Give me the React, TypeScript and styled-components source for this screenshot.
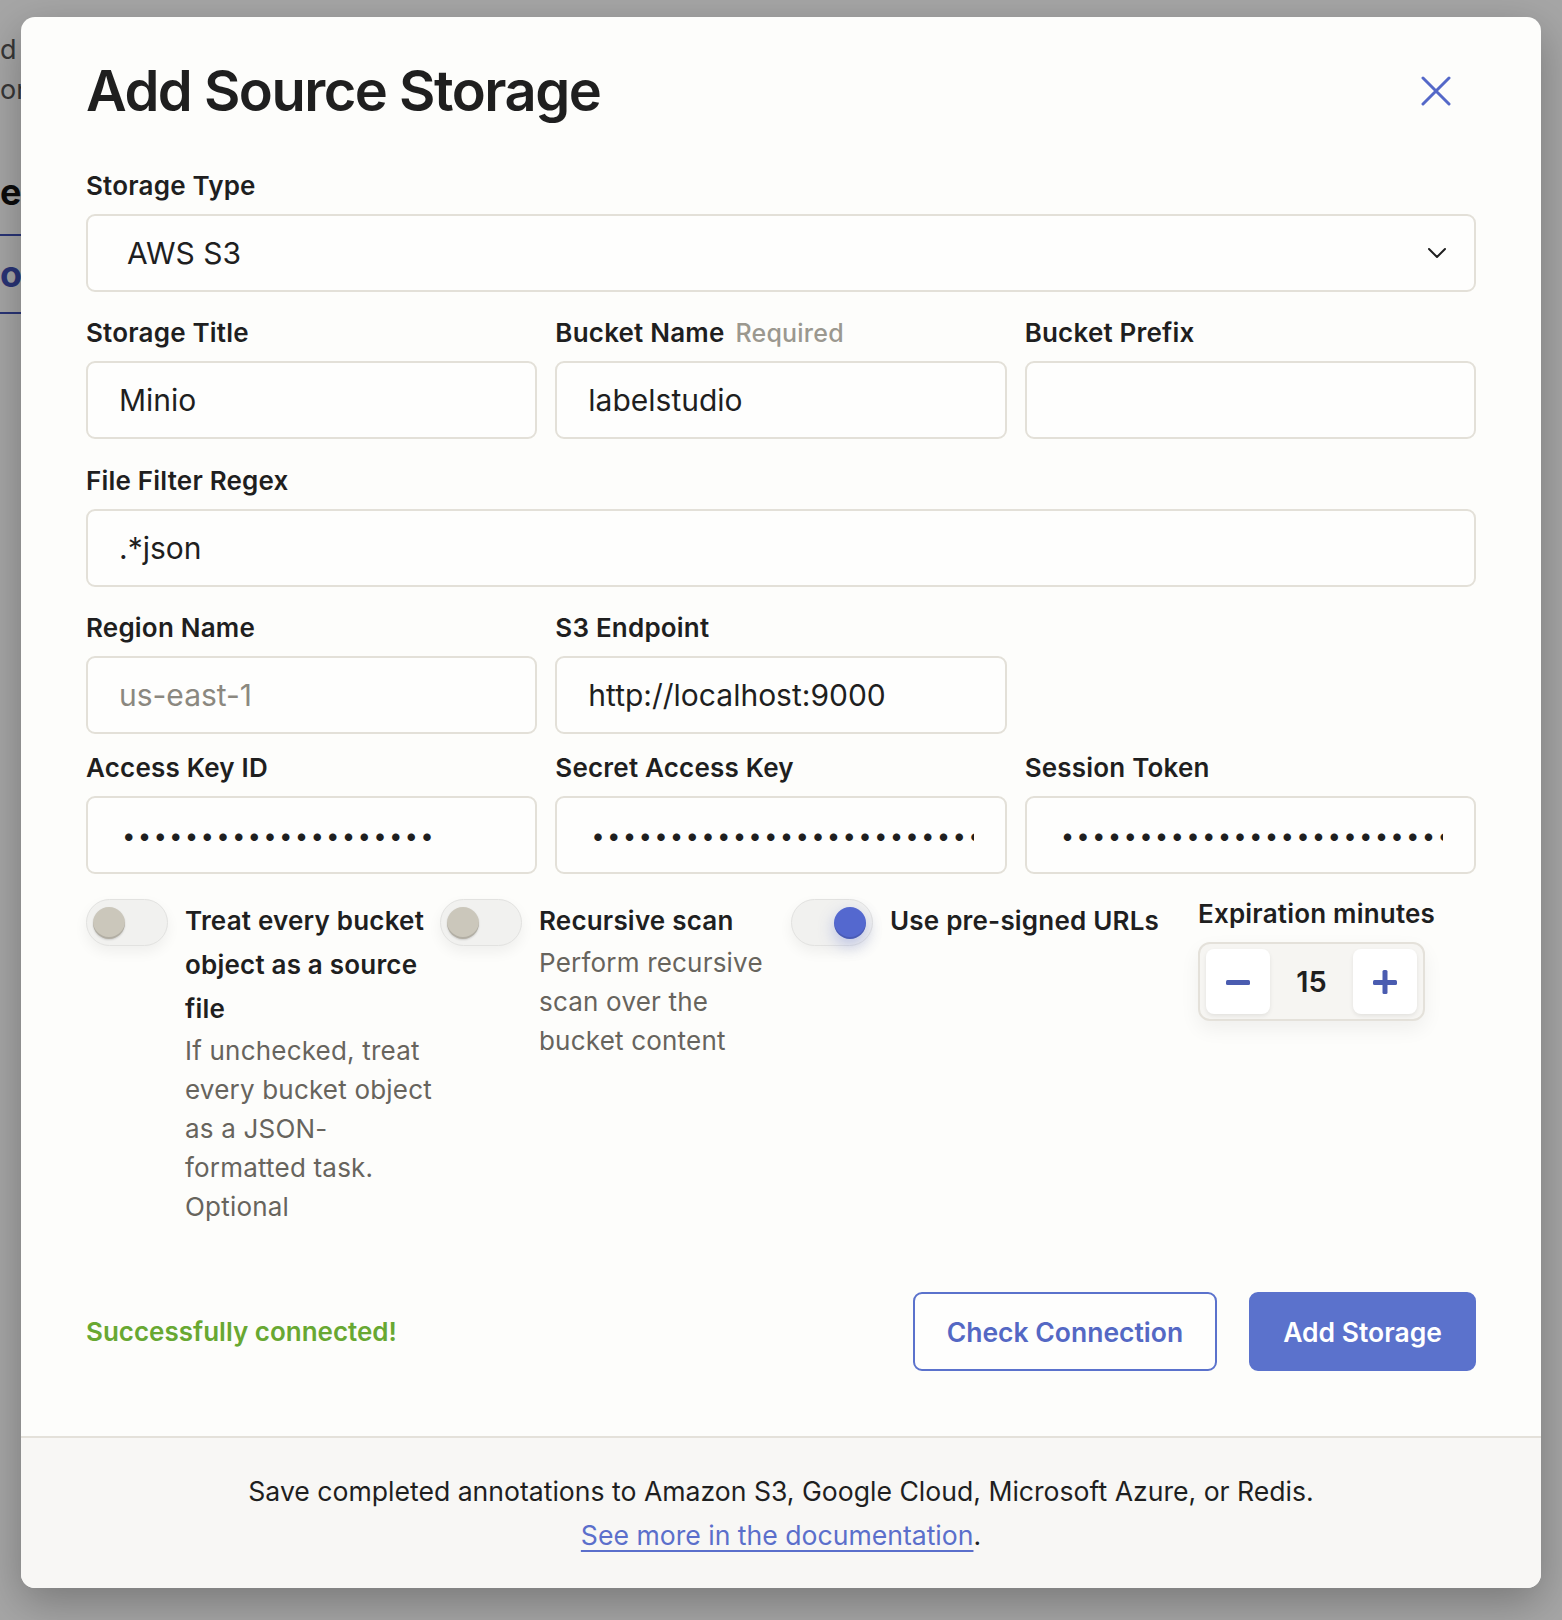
import * as React from 'react';
import styled, { createGlobalStyle } from 'styled-components';

const GlobalStyle = createGlobalStyle`
  html, body { margin: 0; padding: 0; }
  body {
    font-family: Inter, "Liberation Sans", sans-serif;
    background: #ffffff;
    color: #1f1f1f;
  }
  * { box-sizing: border-box; }
`;

const Page = styled.div`
  position: relative;
  width: 1562px;
  height: 1620px;
  overflow: hidden;
  background: #ffffff;
`;

// the project page that sits behind the dialog
const BehindPage = styled.div`
  display: flex;
  flex-direction: column;
  padding-top: 30px;
`;

const BehindLine = styled.div<{ $bold?: boolean; $blue?: boolean }>`
  font-size: ${(p) => (p.$bold ? 36 : 27)}px;
  font-weight: ${(p) => (p.$bold ? 700 : 400)};
  color: ${(p) => (p.$blue ? '#3f51b5' : p.$bold ? '#111' : '#555')};
  line-height: 40px;
  white-space: nowrap;
`;

const BehindTab = styled.div`
  border-top: 2px solid #3f51b5;
  border-bottom: 2px solid #3f51b5;
  padding: 18px 0;
  margin-top: 22px;
  width: 60px;
`;

const Overlay = styled.div`
  position: absolute;
  inset: 0;
  background: rgba(0, 0, 0, 0.35);
  display: flex;
  justify-content: center;
  align-items: flex-start;
  padding-top: 17px;
`;

const Modal = styled.div`
  width: 1520px;
  background: #fdfdfb;
  border-radius: 14px;
  overflow: hidden;
  box-shadow: 0 14px 44px rgba(0, 0, 0, 0.28);
`;

const Body = styled.div`
  padding: 40px 65px 65px;
`;

const Header = styled.div`
  display: flex;
  align-items: center;
  justify-content: space-between;
`;

const Title = styled.h1`
  margin: 0;
  font-size: 56px;
  line-height: 68px;
  font-weight: 600;
  letter-spacing: -1.5px;
  color: #1f1f1f;
`;

const CloseButton = styled.button`
  border: none;
  background: none;
  padding: 0;
  margin-right: 25px;
  width: 30px;
  height: 30px;
  display: flex;
  color: #5468c8;
  cursor: pointer;
`;

const Form = styled.div`
  margin-top: 46px;
  display: flex;
  flex-direction: column;
`;

const Row = styled.div<{ $cols: number; $gap?: number }>`
  display: grid;
  grid-template-columns: repeat(${(p) => p.$cols}, 1fr);
  column-gap: 18px;
  margin-top: ${(p) => p.$gap ?? 26}px;
  &:first-child { margin-top: 0; }
`;

const Field = styled.div`
  display: flex;
  flex-direction: column;
  min-width: 0;
`;

const Label = styled.label`
  display: flex;
  align-items: baseline;
  gap: 11px;
  font-size: 26px;
  line-height: 30px;
  font-weight: 600;
  letter-spacing: 0.2px;
  color: #1f1f1f;
  margin-bottom: 13px;
`;

const Hint = styled.span`
  font-weight: 500;
  font-size: 25px;
  color: #9b988f;
`;

const Input = styled.input`
  width: 100%;
  height: 78px;
  border: 2px solid #e3e0d8;
  border-radius: 9px;
  background: #fefefd;
  padding: 0 31px;
  font-family: inherit;
  font-size: 30px;
  color: #1f1f1f;
  outline: none;
  &::placeholder { color: #8b8880; }
  &[type='password'] {
    letter-spacing: 2.2px;
    font-size: 24px;
    padding-left: 34px;
  }
`;

const SelectBox = styled.div`
  height: 78px;
  border: 2px solid #e3e0d8;
  border-radius: 9px;
  background: #fefefd;
  padding: 0 27px 0 39px;
  display: flex;
  align-items: center;
  justify-content: space-between;
  font-size: 30px;
  color: #1f1f1f;
`;

const Options = styled.div`
  display: flex;
  align-items: flex-start;
  margin-top: 25px;
`;

const ToggleOption = styled.div<{ $width: number }>`
  display: flex;
  align-items: flex-start;
  gap: 17px;
  width: ${(p) => p.$width}px;
  flex-shrink: 0;
`;

const Track = styled.span<{ $on?: boolean }>`
  flex-shrink: 0;
  width: 82px;
  height: 47px;
  border-radius: 24px;
  background: #f1f1ef;
  border: 1px solid #e2e2e0;
  box-shadow: 0 6px 14px rgba(0, 0, 0, 0.06);
  display: flex;
  align-items: center;
  justify-content: ${(p) => (p.$on ? 'flex-end' : 'flex-start')};
  padding: 0 6px;
`;

const Knob = styled.span<{ $on?: boolean }>`
  width: 32px;
  height: 32px;
  border-radius: 50%;
  background: ${(p) => (p.$on ? '#5468cf' : '#cbc7bb')};
  box-shadow: ${(p) =>
    p.$on
      ? 'inset 0 -2px 0 rgba(0,0,0,0.12), 0 6px 16px rgba(84,104,207,0.35)'
      : 'inset 0 -2px 0 rgba(0,0,0,0.12), 0 1px 2px rgba(0,0,0,0.15)'};
`;

const OptionText = styled.div`
  display: flex;
  flex-direction: column;
  min-width: 0;
  flex: 1;
`;

const OptionTitle = styled.div`
  font-size: 26px;
  line-height: 44px;
  font-weight: 600;
  letter-spacing: 0.2px;
  color: #1f1f1f;
`;

const OptionDesc = styled.div`
  font-size: 26px;
  line-height: 39px;
  letter-spacing: 0.2px;
  color: #67645d;
`;

const Expiration = styled.div`
  display: flex;
  flex-direction: column;
`;

const Stepper = styled.div`
  width: 227px;
  height: 79px;
  border: 2px solid #e4e1da;
  border-radius: 12px;
  background: #f6f5f2;
  padding: 5px 6px;
  display: flex;
  align-items: stretch;
  box-shadow: 0 8px 20px rgba(0, 0, 0, 0.06);
`;

const StepButton = styled.button`
  width: 64px;
  border: none;
  border-radius: 8px;
  background: #ffffff;
  box-shadow: 0 2px 4px rgba(0, 0, 0, 0.08);
  display: flex;
  align-items: center;
  justify-content: center;
  color: #4a5cb0;
  padding: 0;
  cursor: pointer;
`;

const StepValue = styled.div`
  flex: 1;
  display: flex;
  align-items: center;
  justify-content: center;
  font-size: 29px;
  font-weight: 600;
  color: #1f1f1f;
`;

const ActionRow = styled.div`
  display: flex;
  align-items: center;
  justify-content: space-between;
  margin-top: 66px;
`;

const Status = styled.div`
  font-size: 26px;
  font-weight: 600;
  color: #68a832;
`;

const Buttons = styled.div`
  display: flex;
  gap: 32px;
`;

const Button = styled.button<{ $primary?: boolean }>`
  height: 79px;
  padding: 0 32px;
  border-radius: 9px;
  border: 2px solid #5b72cc;
  background: ${(p) => (p.$primary ? '#5b72cc' : '#fefefd')};
  color: ${(p) => (p.$primary ? '#ffffff' : '#5468c4')};
  font-family: inherit;
  font-size: 26.5px;
  font-weight: 600;
  cursor: pointer;
`;

const Footer = styled.div`
  border-top: 2px solid #e4e1da;
  background: #f8f7f5;
  padding: 31px 0;
  text-align: center;
  font-size: 26.6px;
  line-height: 44px;
  color: #1f1f1f;
`;

const DocLink = styled.a`
  color: #5b6fcb;
  text-decoration: underline;
  text-underline-offset: 5px;
`;

const CloseIcon = () => (
  <svg width="30" height="30" viewBox="0 0 30 30" fill="none">
    <path d="M2 2L28 28M28 2L2 28" stroke="currentColor" strokeWidth="3" strokeLinecap="round" />
  </svg>
);

const Chevron = () => (
  <svg width="20" height="12" viewBox="0 0 20 12" fill="none">
    <path d="M2 2L10 10L18 2" stroke="#1f1f1f" strokeWidth="2" strokeLinecap="round" strokeLinejoin="round" />
  </svg>
);

const MinusIcon = () => (
  <svg width="26" height="26" viewBox="0 0 26 26">
    <rect x="1" y="11" width="24" height="5" rx="1.5" fill="currentColor" />
  </svg>
);

const PlusIcon = () => (
  <svg width="26" height="26" viewBox="0 0 26 26">
    <rect x="1" y="11" width="24" height="5" rx="1.5" fill="currentColor" />
    <rect x="10.5" y="1" width="5" height="24" rx="1.5" fill="currentColor" />
  </svg>
);

const Toggle = ({ on }: { on?: boolean }) => (
  <Track $on={on}>
    <Knob $on={on} />
  </Track>
);

const secret = (n: number) => 'x'.repeat(n);

export default function App() {
  return (
    <Page>
      <GlobalStyle />
      <BehindPage>
        <BehindLine>d c</BehindLine>
        <BehindLine>on</BehindLine>
        <BehindLine $bold style={{ marginTop: 62 }}>e C</BehindLine>
        <BehindTab>
          <BehindLine $bold $blue>ou</BehindLine>
        </BehindTab>
      </BehindPage>

      <Overlay>
        <Modal>
          <Body>
            <Header>
              <Title>Add Source Storage</Title>
              <CloseButton aria-label="Close">
                <CloseIcon />
              </CloseButton>
            </Header>

            <Form>
              <Row $cols={1}>
                <Field>
                  <Label>Storage Type</Label>
                  <SelectBox>
                    <span>AWS S3</span>
                    <Chevron />
                  </SelectBox>
                </Field>
              </Row>

              <Row $cols={3}>
                <Field>
                  <Label>Storage Title</Label>
                  <Input defaultValue="Minio" />
                </Field>
                <Field>
                  <Label>
                    Bucket Name <Hint>Required</Hint>
                  </Label>
                  <Input defaultValue="labelstudio" />
                </Field>
                <Field>
                  <Label>Bucket Prefix</Label>
                  <Input />
                </Field>
              </Row>

              <Row $cols={1} $gap={27}>
                <Field>
                  <Label>File Filter Regex</Label>
                  <Input defaultValue=".*json" />
                </Field>
              </Row>

              <Row $cols={3}>
                <Field>
                  <Label>Region Name</Label>
                  <Input placeholder="us-east-1" />
                </Field>
                <Field>
                  <Label>S3 Endpoint</Label>
                  <Input defaultValue="http://localhost:9000" />
                </Field>
              </Row>

              <Row $cols={3} $gap={19}>
                <Field>
                  <Label>Access Key ID</Label>
                  <Input type="password" defaultValue={secret(20)} />
                </Field>
                <Field>
                  <Label>Secret Access Key</Label>
                  <Input type="password" defaultValue={secret(40)} />
                </Field>
                <Field>
                  <Label>Session Token</Label>
                  <Input type="password" defaultValue={secret(40)} />
                </Field>
              </Row>

              <Options>
                <ToggleOption $width={354}>
                  <Toggle />
                  <OptionText>
                    <OptionTitle>Treat every bucket object as a source file</OptionTitle>
                    <OptionDesc>
                      If unchecked, treat every bucket object as a JSON-formatted task. Optional
                    </OptionDesc>
                  </OptionText>
                </ToggleOption>
                <ToggleOption $width={351}>
                  <Toggle />
                  <OptionText>
                    <OptionTitle>Recursive scan</OptionTitle>
                    <OptionDesc>Perform recursive scan over the bucket content</OptionDesc>
                  </OptionText>
                </ToggleOption>
                <ToggleOption $width={407}>
                  <Toggle on />
                  <OptionText>
                    <OptionTitle>Use pre-signed URLs</OptionTitle>
                  </OptionText>
                </ToggleOption>
                <Expiration>
                  <Label>Expiration minutes</Label>
                  <Stepper>
                    <StepButton aria-label="Decrease">
                      <MinusIcon />
                    </StepButton>
                    <StepValue>15</StepValue>
                    <StepButton aria-label="Increase">
                      <PlusIcon />
                    </StepButton>
                  </Stepper>
                </Expiration>
              </Options>
            </Form>

            <ActionRow>
              <Status>Successfully connected!</Status>
              <Buttons>
                <Button>Check Connection</Button>
                <Button $primary>Add Storage</Button>
              </Buttons>
            </ActionRow>
          </Body>

          <Footer>
            Save completed annotations to Amazon S3, Google Cloud, Microsoft Azure, or Redis.
            <br />
            <DocLink href="#">See more in the documentation</DocLink>.
          </Footer>
        </Modal>
      </Overlay>
    </Page>
  );
}
